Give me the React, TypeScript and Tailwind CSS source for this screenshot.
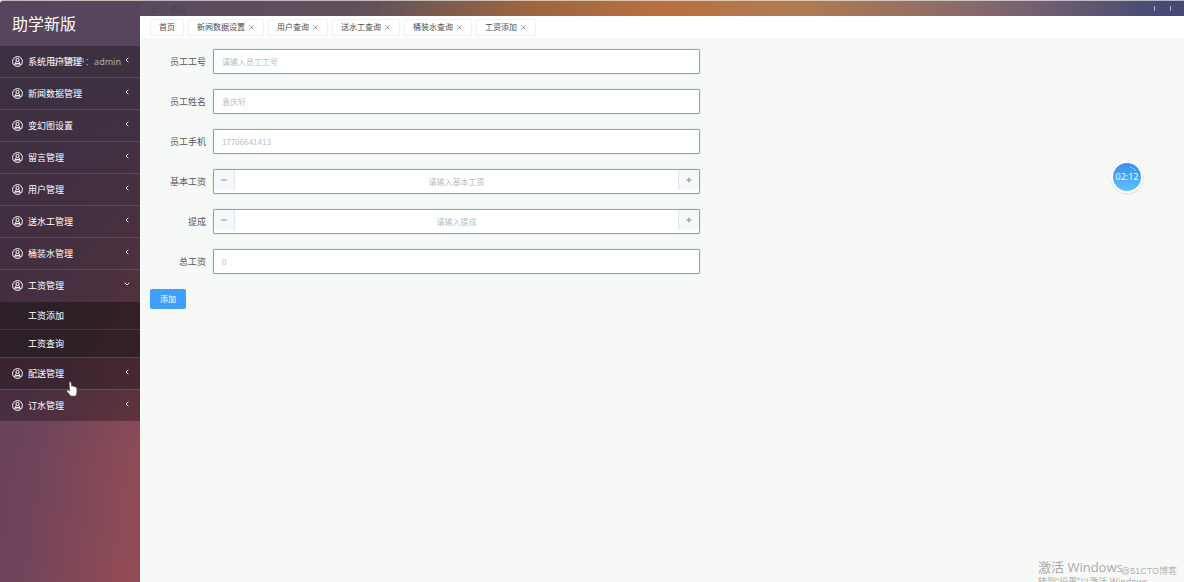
import React from 'react';
import { ChevronDown, ChevronLeft, Menu, Minus, Plus, X } from 'lucide-react';

const menus = [
  { name: '系统用户管理' },
  { name: '新闻数据管理' },
  { name: '变幻图设置' },
  { name: '留言管理' },
  { name: '用户管理' },
  { name: '送水工管理' },
  { name: '桶装水管理' },
  { name: '工资管理', children: ['工资添加', '工资查询'] },
  { name: '配送管理', hover: true },
  { name: '订水管理' },
];

const tabs = ['首页', '新闻数据设置', '用户查询', '送水工查询', '桶装水查询', '工资添加'];

const fields = [
  { id: 'gonghao', label: '员工工号', placeholder: '请输入员工工号' },
  { id: 'xingming', label: '员工姓名', placeholder: '袁庆轩' },
  { id: 'shouji', label: '员工手机', placeholder: '17706641413' },
  { id: 'jiben', label: '基本工资', placeholder: '请输入基本工资', number: true },
  { id: 'ticheng', label: '提成', placeholder: '请输入提成', number: true },
  { id: 'zong', label: '总工资', placeholder: '0' },
];

function UserIcon() {
  return (
    <svg className="h-[11px] w-[11px] shrink-0" viewBox="0 0 22 22" fill="none" stroke="currentColor" strokeWidth="2">
      <circle cx="11" cy="11" r="9.8" />
      <circle cx="11" cy="8" r="3.2" />
      <path d="M8.8 10.6 L6 15.5 H16 L13.2 10.6" />
      <path d="M4.5 17.5 C6 15.8 8 15.5 11 15.5 C14 15.5 16 15.8 17.5 17.5" />
    </svg>
  );
}

function Sidebar() {
  return (
    <aside className="relative w-[140px] shrink-0 overflow-hidden rounded-tl border-t border-white/60 bg-[linear-gradient(98deg,#643f5c_0%,#70445a_45%,#944c55_100%)] text-white">
      <div className="absolute inset-0 bg-[linear-gradient(180deg,#57455e_0%,#57455e_12%,transparent_78%)]" />
      <div className="relative">
        <h1 className="flex h-11 items-center px-3 text-base">助学新版</h1>
        <nav className="bg-black/30 text-[9px]">
          {menus.map((menu) => (
            <div key={menu.name}>
              <button
                className={`flex h-8 w-full items-center border-t border-white/12 pr-[9px] pl-3 text-left ${menu.hover ? 'bg-black/20' : ''}`}
              >
                <UserIcon />
                <span className="ml-[5px] flex-1">{menu.name}</span>
                {menu.children ? (
                  <ChevronDown className="mb-[3px] h-2 w-2" strokeWidth={3} />
                ) : (
                  <ChevronLeft className="mb-[3px] h-2 w-2" strokeWidth={3} />
                )}
              </button>
              {menu.children && (
                <div className="bg-[#1c1517]/60">
                  {menu.children.map((child) => (
                    <a key={child} href="#" className="flex h-7 items-center border-t border-white/10 pl-7">
                      {child}
                    </a>
                  ))}
                </div>
              )}
            </div>
          ))}
        </nav>
        {/* current user, slides under the first menu row */}
        <span className="absolute top-[55px] right-[19px] text-[9px] leading-3 whitespace-nowrap text-white/60">
          当前用户：<span className="font-['Noto_Sans','Noto_Sans_CJK_SC',sans-serif]">admin</span>
        </span>
      </div>
    </aside>
  );
}

function TopBar() {
  return (
    <header className="flex h-4 items-center justify-between border-t border-white/60 bg-[linear-gradient(90deg,#5a4a60_0%,#62515a_22%,#9c6540_37%,#b9703e_50%,#b07c52_63%,#87696c_80%,#454a75_98%)] pr-[13px] pl-2.5">
      <div className="flex items-center gap-2.5 text-[8px] text-black/20">
        <Menu className="h-2.5 w-2.5" />
        <span>首页</span>
      </div>
      <div className="flex gap-[15px]">
        <i className="h-[5px] w-px bg-white/60" />
        <i className="h-[5px] w-px bg-white/60" />
      </div>
    </header>
  );
}

function TabBar() {
  return (
    <div className="flex h-[22px] items-center gap-1 bg-white px-2.5 text-[8px] text-[#4b4d50]">
      {tabs.map((tab, i) => (
        <div key={tab} className="flex h-[17px] items-center border border-[#f0f1f3] px-2 whitespace-nowrap">
          <a href="#">{tab}</a>
          {i > 0 && (
            <button aria-label={`关闭${tab}`} className="ml-[3px]">
              <X className="h-[7px] w-[7px]" strokeWidth={2} />
            </button>
          )}
        </div>
      ))}
    </div>
  );
}

function SalaryForm() {
  return (
    <form className="w-full max-w-[570px] px-2.5 pt-[11px]">
      <div className="flex flex-col gap-[15px]">
        {fields.map((field) => (
          <div key={field.id} className="flex items-center">
            <label htmlFor={field.id} className="w-14 shrink-0 text-right text-[9px] text-[#55585c]">
              {field.label}
            </label>
            <div className="ml-[7px] flex h-[25px] min-w-0 flex-1 items-start overflow-hidden rounded-xs border border-[#52c78f] bg-white shadow-[0_0_1px_#52c78f]">
              {field.number && (
                <button type="button" aria-label="减少" className="flex h-5 w-[21px] items-center justify-center border-r border-[#e4e7ed] bg-[#f5f7fa] text-[#606266]">
                  <Minus className="h-2 w-2" strokeWidth={2} />
                </button>
              )}
              <input
                id={field.id}
                type="text"
                placeholder={field.placeholder}
                className={`h-full min-w-0 flex-1 bg-white px-2 text-[8px] outline-none placeholder:text-[#b9bbc0] ${field.number ? 'text-center' : ''}`}
              />
              {field.number && (
                <button type="button" aria-label="增加" className="flex h-5 w-[21px] items-center justify-center border-l border-[#e4e7ed] bg-[#f5f7fa] text-[#606266]">
                  <Plus className="h-2 w-2" strokeWidth={2} />
                </button>
              )}
            </div>
          </div>
        ))}
      </div>
      <button type="button" className="mt-[15px] h-5 w-9 rounded-xs bg-[#409eff] text-[8px] text-white">
        添加
      </button>
    </form>
  );
}

function Overlays() {
  return (
    <>
      {/* recorder timer */}
      <div className="absolute top-[161px] right-[41px] flex h-8 w-8 items-center justify-center rounded-full border-2 border-white bg-linear-to-b from-[#3d8df0] to-[#5cc0fb] font-['Open_Sans',sans-serif] text-[9px] text-white shadow-sm">
        02:12
        <svg className="absolute inset-0" viewBox="0 0 28 28" fill="none" stroke="#b5dcff" strokeWidth="0.8">
          <path d="M17 4 Q21 5 23 8" />
        </svg>
      </div>

      {/* activation notice */}
      <div className="absolute top-[558px] right-5 w-[126px] font-['Open_Sans','Noto_Sans_CJK_SC',sans-serif] whitespace-nowrap text-[#a9abab]">
        <p className="text-[13px] leading-[18px]">激活 Windows</p>
        <p className="text-[9px] leading-3">转到“设置”以激活 Windows。</p>
      </div>
      <span className="absolute top-[565px] right-[7px] font-['Liberation_Sans','Noto_Sans_CJK_SC',sans-serif] text-[9px] leading-3 text-[#b0b2b2]">
        @51CTO博客
      </span>

      {/* mouse pointer */}
      <svg className="absolute top-[381px] left-[66px] h-4 w-3" viewBox="0 0 12 16" fill="#fff" stroke="#555" strokeWidth="0.5">
        <path d="M3.2 1.2 Q4.3 0.2 5 1.4 L5.6 5.2 Q6.8 4.6 7.2 5.5 Q8.4 5 8.9 6 Q10.4 5.6 10.7 7 L10.9 11 L9.8 15 H4.8 L1 10.4 Q0.6 8.8 2.4 9.2 L3.8 10.2 Z" />
      </svg>
    </>
  );
}

export default function App() {
  return (
    <div className="relative flex h-screen overflow-hidden bg-[#f7f9f7] font-['Noto_Sans_CJK_SC',sans-serif]">
      <Sidebar />
      <main className="min-w-0 flex-1">
        <TopBar />
        <TabBar />
        <SalaryForm />
      </main>
      <Overlays />
    </div>
  );
}
